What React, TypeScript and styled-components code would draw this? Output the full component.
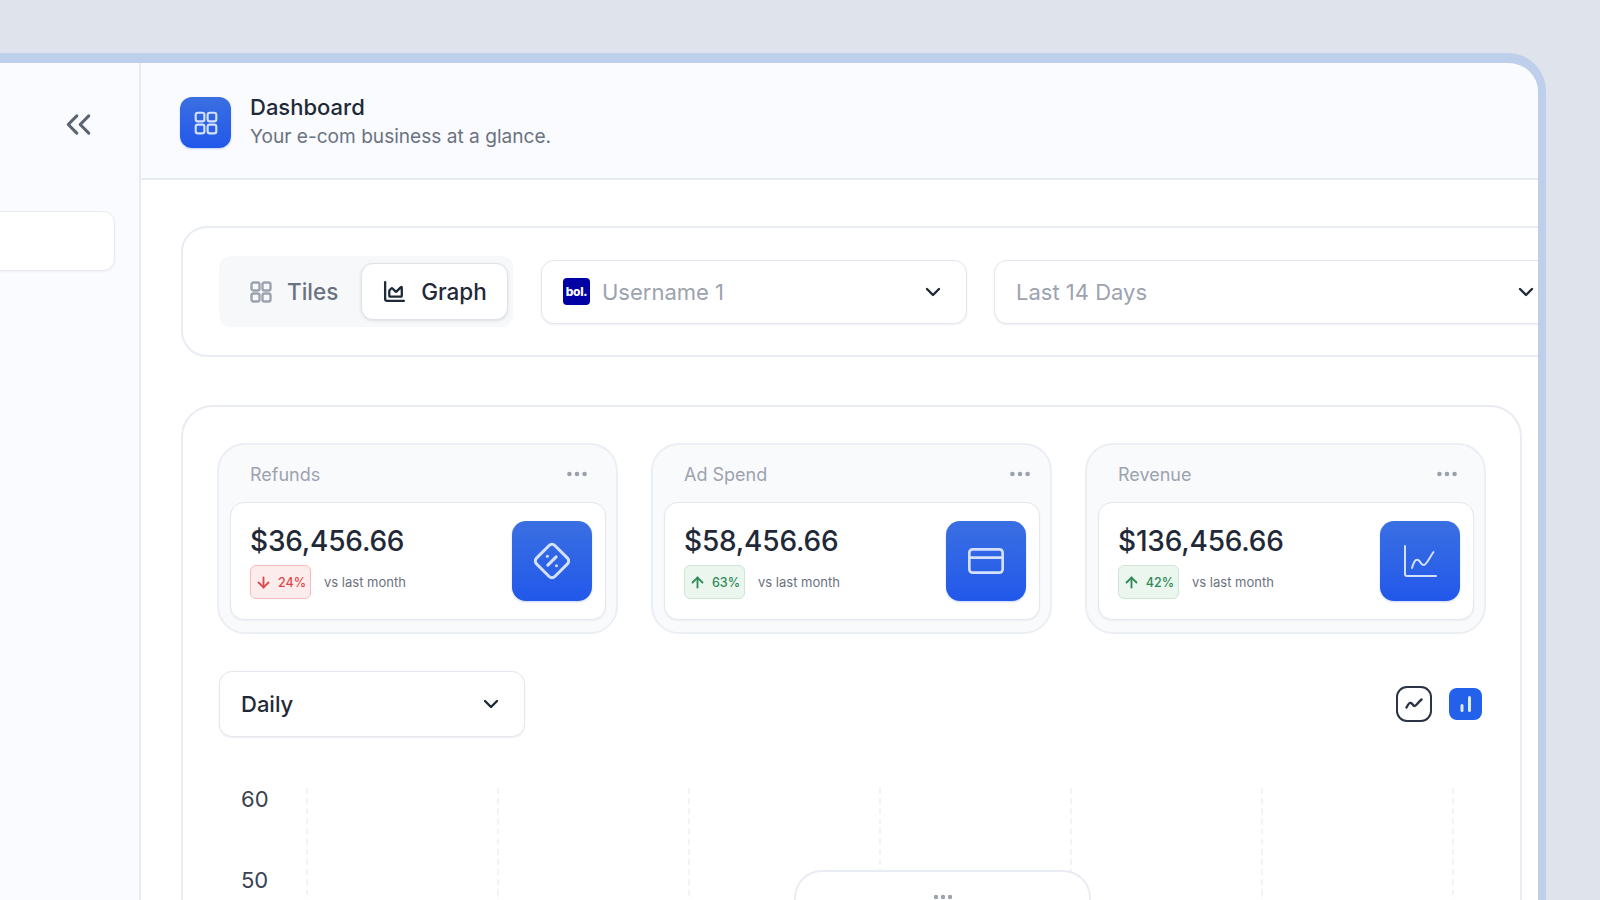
import React from 'react';
import styled, { createGlobalStyle } from 'styled-components';
import {
  ArrowDown,
  ArrowUp,
  ChartArea,
  ChevronDown,
  ChevronsLeft,
  CreditCard,
  DiamondPercent,
  Ellipsis,
} from 'lucide-react';

const GlobalStyle = createGlobalStyle`
  html, body {
    margin: 0;
    height: 100%;
    overflow: hidden;
    background: #dfe3ec;
    font-family: Inter, "Liberation Sans", sans-serif;
    color: #1f2937;
    -webkit-font-smoothing: antialiased;
  }
  * { box-sizing: border-box; }
`;

const Page = styled.div`
  height: 900px;
  padding: 53px 54px 0 0;
  overflow: hidden;
`;

const Frame = styled.div`
  display: flex;
  margin-left: -50px;
  height: 1000px;
  border: solid #becfeb;
  border-width: 10px 8px 0 8px;
  border-radius: 38px 38px 0 0;
  background: #f9fbfe;
  overflow: hidden;
`;

const Sidebar = styled.aside`
  width: 183px;
  flex: none;
  display: flex;
  flex-direction: column;
  align-items: flex-end;
  padding: 46px 24px 0 0;
  border-right: 2px solid #e8ebf1;
  color: #5b6472;
`;

const Collapse = styled.div`
  display: flex;
  margin-right: 16px;
  height: 30px;
  align-items: center;
`;

const SideItem = styled.div`
  width: 200px;
  height: 60px;
  margin-top: 72px;
  background: #fff;
  border: 1.5px solid #e8ebf1;
  border-radius: 12px;
  box-shadow: 0 1px 2px rgba(30, 41, 59, 0.05);
`;

const Content = styled.div`
  flex: 1;
  min-width: 0;
  display: flex;
  flex-direction: column;
`;

const Header = styled.header`
  height: 117px;
  flex: none;
  display: flex;
  align-items: center;
  gap: 19px;
  padding: 4px 39px 0;
  border-bottom: 2px solid #e8ebf1;
`;

const IconTile = styled.div<{ $size: number; $radius: number }>`
  width: ${(p) => p.$size}px;
  height: ${(p) => p.$size}px;
  flex: none;
  display: flex;
  align-items: center;
  justify-content: center;
  color: #d3e0ff;
  border-radius: ${(p) => p.$radius}px;
  background: linear-gradient(180deg, #3a6fe2 0%, #2258ea 100%);
  box-shadow: 0 1px 2px rgba(34, 88, 234, 0.25);
`;

const HeadText = styled.div`
  display: flex;
  flex-direction: column;
  gap: 4px;
  margin-top: -3px;
`;

const Title = styled.h1`
  margin: 0;
  font-size: 22px;
  line-height: 26px;
  font-weight: 500;
  color: #1f2937;
`;

const Subtitle = styled.p`
  margin: 0;
  font-size: 19.1px;
  line-height: 24px;
  color: #6b7280;
`;

const Main = styled.main`
  flex: 1;
  overflow: hidden;
  padding: 46px 16px 0 40px;
  background: #fff;
`;

const FilterCard = styled.section`
  height: 131px;
  margin-right: -76px;
  display: flex;
  align-items: center;
  gap: 27px;
  padding: 0 36px;
  border: 2px solid #e9ecf2;
  border-radius: 26px;
  background: #fff;
`;

const Segment = styled.div`
  width: 294px;
  height: 71px;
  flex: none;
  margin-right: 1px;
  display: flex;
  align-items: center;
  justify-content: space-between;
  padding: 0 5px 0 30px;
  background: #f7f8fa;
  border-radius: 12px;
`;

const SegmentOption = styled.div<{ $active?: boolean }>`
  display: flex;
  align-items: center;
  gap: 14px;
  font-size: 22.5px;
  font-weight: 500;
  color: ${(p) => (p.$active ? '#1f2937' : '#6b7280')};
  ${(p) =>
    p.$active &&
    `
    width: 147px;
    height: 57px;
    justify-content: center;
    background: #fff;
    border: 1.5px solid #dfe2e9;
    border-radius: 12px;
    box-shadow: 0 1px 3px rgba(30, 41, 59, 0.12);
  `}
`;

const TilesGlyph = styled.span`
  display: flex;
  color: #9ca3af;
`;

const Select = styled.div<{ $width?: number; $height: number; $dark?: boolean }>`
  height: ${(p) => p.$height}px;
  ${(p) => (p.$width ? `width: ${p.$width}px; flex: none;` : 'flex: 1;')}
  display: flex;
  align-items: center;
  gap: 12px;
  padding: 0 21px 0 21px;
  background: #fff;
  border: 1.5px solid #e4e7ed;
  border-radius: 13px;
  box-shadow: 0 1px 2px rgba(30, 41, 59, 0.08);
  font-size: 22px;
  color: ${(p) => (p.$dark ? '#1f2937' : '#9ca3af')};
  font-weight: ${(p) => (p.$dark ? 500 : 400)};
  svg { margin-left: auto; color: #1f2937; }
`;

const BolLogo = styled.span`
  width: 27px;
  height: 27px;
  flex: none;
  display: flex;
  align-items: center;
  justify-content: center;
  background: #0000a4;
  border-radius: 4px;
  color: #fff;
  font-size: 12px;
  font-weight: 800;
  letter-spacing: -0.3px;
`;

const StatsPanel = styled.section`
  margin-top: 48px;
  height: 600px;
  padding: 36px 34px 0 34px;
  border: 2px solid #e9ecf2;
  border-radius: 32px;
  background: #fff;
`;

const StatGrid = styled.div`
  display: grid;
  grid-template-columns: repeat(3, 401px);
  gap: 33px;
`;

const StatCard = styled.article`
  height: 191px;
  padding: 0 10px 0 11px;
  border: 2px solid #ebeef3;
  border-radius: 28px;
  background: #f9fafc;
`;

const StatHead = styled.div<{ $dotsRight: number }>`
  height: 57px;
  display: flex;
  align-items: center;
  justify-content: space-between;
  padding: 1px ${(p) => p.$dotsRight}px 0 20px;
  font-size: 18px;
  color: #9ca3af;
  svg { color: #9aa1ad; }
`;

const StatBody = styled.div`
  height: 118px;
  display: flex;
  align-items: center;
  justify-content: space-between;
  padding: 0 13px 0 19px;
  background: #fff;
  border: 1.5px solid #e5e8ee;
  border-radius: 14px;
  box-shadow: 0 1px 2px rgba(30, 41, 59, 0.06);
`;

const Value = styled.div`
  font-size: 28px;
  line-height: 36px;
  font-weight: 500;
  color: #1f2937;
  letter-spacing: -0.2px;
`;

const Delta = styled.div`
  display: flex;
  align-items: center;
  gap: 13px;
  margin-top: 6px;
  font-size: 13px;
  color: #6b7280;
`;

const Badge = styled.span<{ $down?: boolean }>`
  width: 61px;
  height: 34px;
  display: flex;
  align-items: center;
  justify-content: center;
  gap: 6px;
  font-size: 12.5px;
  font-weight: 500;
  border-radius: 6px;
  color: ${(p) => (p.$down ? '#e0484a' : '#2f8a57')};
  background: ${(p) => (p.$down ? '#fdecec' : '#eaf6ee')};
  border: 1px solid ${(p) => (p.$down ? '#f3bcbc' : '#cfe6d7')};
`;

const Toolbar = styled.div`
  margin-top: 37px;
  display: flex;
  align-items: center;
  justify-content: space-between;
  padding: 0 4px 0 2px;
`;

const ChartSwitch = styled.div`
  display: flex;
  align-items: center;
  gap: 17px;
`;

const LineToggle = styled.div`
  width: 36px;
  height: 36px;
  display: flex;
  align-items: center;
  justify-content: center;
  border: 2.5px solid #2b3444;
  border-radius: 11px;
  color: #2b3444;
`;

const BarToggle = styled.div`
  width: 33px;
  height: 32px;
  display: flex;
  align-items: center;
  justify-content: center;
  background: #2361ea;
  border-radius: 8px;
  color: #dfe9ff;
`;

const Chart = styled.div`
  position: relative;
  margin-top: 51px;
  display: flex;
  height: 300px;
`;

const YAxis = styled.div`
  width: 89px;
  flex: none;
  display: flex;
  flex-direction: column;
  gap: 59px;
  padding-left: 24px;
  font-size: 22px;
  line-height: 22px;
  color: #374151;
`;

const GridColumn = styled.div<{ $last?: boolean }>`
  width: ${(p) => (p.$last ? 0 : 191)}px;
  flex: none;
  border-left: 2px dashed #f2f3f6;
`;

const Tooltip = styled.div`
  position: absolute;
  left: 577px;
  top: 82px;
  width: 297px;
  height: 120px;
  display: flex;
  justify-content: center;
  background: #fff;
  border: 2px solid #e9ecf2;
  border-radius: 28px;
  color: #9aa1ad;
`;

const DotsRow = styled.div`
  margin-top: 13px;
  height: 24px;
  display: flex;
  align-items: flex-start;
`;

const GridIcon = ({ size, stroke }: { size: number; stroke: number }) => (
  <svg width={size} height={size} viewBox="0 0 24 24" fill="none" stroke="currentColor" strokeWidth={stroke}>
    <rect x="2.5" y="2.5" width="8" height="8" rx="2" />
    <rect x="13.5" y="2.5" width="8" height="8" rx="2" />
    <rect x="2.5" y="13.5" width="8" height="8" rx="2" />
    <rect x="13.5" y="13.5" width="8" height="8" rx="2" />
  </svg>
);

const GrowthIcon = () => (
  <svg width="36" height="36" viewBox="0 0 36 36" fill="none" stroke="currentColor" strokeWidth="2" strokeLinecap="round">
    <path d="M3 3v28a2 2 0 0 0 2 2h29" />
    <path d="M10 25c1.500-5 3-9 6-8s2.500 5 5.500 5 5-6 10-13" />
  </svg>
);

const SquiggleIcon = () => (
  <svg width="20" height="20" viewBox="0 0 20 20" fill="none" stroke="currentColor" strokeWidth="2.4" strokeLinecap="round" strokeLinejoin="round">
    <path d="M2.500 13.500c1.500-3 3-5 4.500-4.500s2 3 3.500 3 4-4 7-6.500" />
  </svg>
);

const BarsIcon = () => (
  <svg width="20" height="20" viewBox="0 0 20 20" fill="none" stroke="currentColor" strokeWidth="3" strokeLinecap="round">
    <path d="M6 11.500v5" />
    <path d="M13.500 3.500v13" />
  </svg>
);

const stats = [
  { title: 'Refunds', value: '$36,456.66', change: '24%', down: true, dotsRight: 16, icon: <DiamondPercent size={40} strokeWidth={1.8} /> },
  { title: 'Ad Spend', value: '$58,456.66', change: '63%', down: false, dotsRight: 7, icon: <CreditCard size={40} strokeWidth={1.6} /> },
  { title: 'Revenue', value: '$136,456.66', change: '42%', down: false, dotsRight: 14, icon: <GrowthIcon /> },
];

const App: React.FC = () => {
  return (
    <Page>
      <GlobalStyle />
      <Frame>
        <Sidebar>
          <Collapse>
            <ChevronsLeft size={41} strokeWidth={1.8} />
          </Collapse>
          <SideItem />
        </Sidebar>
        <Content>
          <Header>
            <IconTile $size={51} $radius={12}>
              <GridIcon size={26} stroke={2} />
            </IconTile>
            <HeadText>
              <Title>Dashboard</Title>
              <Subtitle>Your e-com business at a glance.</Subtitle>
            </HeadText>
          </Header>
          <Main>
            <FilterCard>
              <Segment>
                <SegmentOption>
                  <TilesGlyph>
                    <GridIcon size={24} stroke={2.4} />
                  </TilesGlyph>
                  Tiles
                </SegmentOption>
                <SegmentOption $active>
                  <ChartArea size={25} strokeWidth={2.2} />
                  Graph
                </SegmentOption>
              </Segment>
              <Select $width={426} $height={64}>
                <BolLogo>bol.</BolLogo>
                Username 1
                <ChevronDown size={24} strokeWidth={2.4} />
              </Select>
              <Select $height={64}>
                Last 14 Days
                <ChevronDown size={24} strokeWidth={2.4} />
              </Select>
            </FilterCard>
            <StatsPanel>
              <StatGrid>
                {stats.map((stat) => (
                  <StatCard key={stat.title}>
                    <StatHead $dotsRight={stat.dotsRight}>
                      {stat.title}
                      <Ellipsis size={26} strokeWidth={2.2} />
                    </StatHead>
                    <StatBody>
                      <div>
                        <Value>{stat.value}</Value>
                        <Delta>
                          <Badge $down={stat.down}>
                            {stat.down ? <ArrowDown size={17} strokeWidth={2.6} /> : <ArrowUp size={17} strokeWidth={2.6} />}
                            {stat.change}
                          </Badge>
                          vs last month
                        </Delta>
                      </div>
                      <IconTile $size={80} $radius={14}>
                        {stat.icon}
                      </IconTile>
                    </StatBody>
                  </StatCard>
                ))}
              </StatGrid>
              <Toolbar>
                <Select $width={306} $height={66} $dark>
                  Daily
                  <ChevronDown size={24} strokeWidth={2.4} />
                </Select>
                <ChartSwitch>
                  <LineToggle>
                    <SquiggleIcon />
                  </LineToggle>
                  <BarToggle>
                    <BarsIcon />
                  </BarToggle>
                </ChartSwitch>
              </Toolbar>
              <Chart>
                <YAxis>
                  <span>60</span>
                  <span>50</span>
                </YAxis>
                {[0, 1, 2, 3, 4, 5, 6].map((i) => (
                  <GridColumn key={i} $last={i === 6} />
                ))}
                <Tooltip>
                  <DotsRow>
                    <Ellipsis size={24} strokeWidth={2.4} />
                  </DotsRow>
                </Tooltip>
              </Chart>
            </StatsPanel>
          </Main>
        </Content>
      </Frame>
    </Page>
  );
};

export default App;
